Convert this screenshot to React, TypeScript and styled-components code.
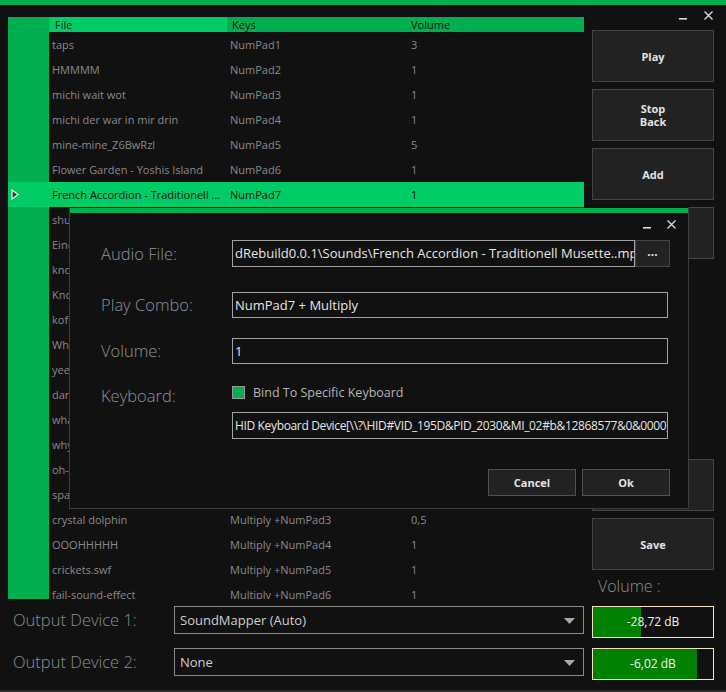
import React from 'react';
import styled, { createGlobalStyle } from 'styled-components';

const GREEN = '#00b050';
const BRIGHT = '#00cc66';
const UI = '"Open Sans", "Noto Sans", "DejaVu Sans", sans-serif';

const Global = createGlobalStyle`
  html, body { margin: 0; padding: 0; background: #111111; }
  body { font-family: ${UI}; }
  * { box-sizing: border-box; }
`;

const Window = styled.div`
  position: relative;
  width: 726px;
  height: 692px;
  background: #111111;
  overflow: hidden;
  display: flex;
  flex-direction: column;
  border-bottom: 2px solid #2a2a2a;
`;

const TopBar = styled.div`
  flex: none;
  height: 5px;
  background: ${GREEN};
`;

const Main = styled.div`
  flex: none;
  display: flex;
  gap: 8px;
  padding-left: 8px;
  height: 594px;
`;

const Grid = styled.div`
  margin-top: 12px;
  width: 576px;
  height: 582px;
  overflow: hidden;
  display: flex;
  flex-direction: column;
`;

const HeaderRow = styled.div`
  flex: none;
  display: grid;
  grid-template-columns: 41px 178px 181px 1fr;
  height: 15px;
  background: ${GREEN};
`;

const HeaderCell = styled.div<{ $active?: boolean; $pad?: number }>`
  background: ${(p) => (p.$active ? BRIGHT : GREEN)};
  color: #141414;
  font-size: 11px;
  line-height: 15px;
  padding-left: ${(p) => p.$pad ?? 5}px;
  white-space: nowrap;
`;

const Row = styled.div<{ $selected?: boolean }>`
  flex: none;
  display: grid;
  grid-template-columns: 41px 178px 181px 1fr;
  height: 25px;
  align-items: center;
  background: ${(p) => (p.$selected ? BRIGHT : '#111111')};
`;

const RowHeader = styled.div<{ $selected?: boolean }>`
  height: 25px;
  background: ${(p) => (p.$selected ? BRIGHT : GREEN)};
  display: flex;
  align-items: center;
  padding-left: 3px;
`;

const Cell = styled.div<{ $selected?: boolean }>`
  color: ${(p) => (p.$selected ? '#0e0e0e' : '#8a8a8a')};
  font-size: 11px;
  padding-left: 3px;
  white-space: nowrap;
  overflow: hidden;
`;

const Side = styled.div`
  width: 122px;
  display: flex;
  flex-direction: column;
  padding-bottom: 3px;
`;

const Controls = styled.div<{ $h: number; $top: number; $right: number; $gap: number }>`
  flex: none;
  height: ${(p) => p.$h}px;
  display: flex;
  justify-content: flex-end;
  align-items: flex-start;
  gap: ${(p) => p.$gap}px;
  padding-top: ${(p) => p.$top}px;
  padding-right: ${(p) => p.$right}px;
`;

const ButtonStack = styled.div`
  display: flex;
  flex-direction: column;
  gap: 7px;
`;

const SideButton = styled.div`
  height: 52px;
  background: #222222;
  border: 1px solid #454545;
  color: #e2e2e2;
  font-size: 11px;
  font-weight: 700;
  line-height: 13px;
  display: flex;
  align-items: center;
  justify-content: center;
  text-align: center;
`;

const Spacer = styled.div`
  flex: 1;
`;

const VolumeLabel = styled.div`
  margin-top: 6px;
  padding-left: 6px;
  color: #8a8f96;
  font-size: 16px;
  font-weight: 300;
  line-height: 20px;
`;

const Bottom = styled.div`
  display: flex;
  flex-direction: column;
  gap: 10px;
  padding-top: 7px;
  padding-left: 13px;
`;

const BottomRow = styled.div`
  display: grid;
  grid-template-columns: 153px 410px 122px;
  column-gap: 8px;
  align-items: start;
`;

const DeviceLabel = styled.div`
  color: #8a8f96;
  font-size: 16.5px;
  font-weight: 300;
  line-height: 28px;
  white-space: nowrap;
`;

const Dropdown = styled.div`
  position: relative;
  height: 28px;
  border: 1px solid #8a8a8a;
  background: #111111;
  color: #cfcfcf;
  font-size: 13px;
  line-height: 26px;
  padding-left: 5px;
`;

const DropArrow = styled.svg`
  position: absolute;
  right: 8px;
  top: 11px;
`;

const Meter = styled.div`
  position: relative;
  height: 32px;
  border: 1px solid #f3e4c6;
  background: #111111;
`;

const MeterFill = styled.div`
  position: absolute;
  left: 0;
  top: 0;
  bottom: 0;
  background: #008000;
`;

const MeterText = styled.div`
  position: relative;
  line-height: 30px;
  text-align: center;
  color: #f2f2f2;
  font-size: 12px;
`;

/* Dialog */
const Dialog = styled.div`
  position: absolute;
  left: 69px;
  top: 207px;
  width: 620px;
  height: 302px;
  background: #111111;
  border: 1px solid #3c3c3c;
  border-top: 1px solid #0c0c0c;
  display: flex;
  flex-direction: column;
`;

const DialogBar = styled.div`
  flex: none;
  height: 5px;
  background: ${GREEN};
`;

const Form = styled.div`
  display: flex;
  flex-direction: column;
  padding-left: 31px;
  padding-right: 18px;
`;

const FormRow = styled.div<{ $mt: number; $top?: boolean }>`
  display: grid;
  grid-template-columns: 131px 1fr;
  align-items: ${(p) => (p.$top ? 'start' : 'center')};
  margin-top: ${(p) => p.$mt}px;
`;

const FieldLabel = styled.div`
  color: #8a939c;
  font-size: 16.5px;
  font-weight: 300;
  line-height: 20px;
  white-space: nowrap;
`;

const Field = styled.div`
  display: flex;
`;

const Input = styled.div<{ $w: number; $h: number; $tight?: boolean }>`
  width: ${(p) => p.$w}px;
  height: ${(p) => p.$h}px;
  border: 1px solid #a2a2a2;
  background: #111111;
  color: #e6e6e6;
  font-size: ${(p) => (p.$tight ? '12px' : '13px')};
  letter-spacing: ${(p) => (p.$tight ? '-0.35px' : '0')};
  line-height: ${(p) => p.$h - 2}px;
  padding-left: 2px;
  white-space: nowrap;
  overflow: hidden;
`;

const Browse = styled.div`
  width: 35px;
  height: 27px;
  background: #222222;
  border: 1px solid #454545;
  color: #e2e2e2;
  font-size: 12px;
  font-weight: 700;
  line-height: 22px;
  text-align: center;
`;

const CheckRow = styled.div`
  display: flex;
  align-items: center;
  gap: 8px;
  height: 13px;
`;

const Box = styled.div`
  width: 13px;
  height: 13px;
  border: 1px solid #9a9a9a;
  background: ${GREEN};
`;

const CheckText = styled.div`
  color: #b4b4b4;
  font-size: 12.5px;
  line-height: 13px;
  white-space: nowrap;
`;

const ActionRow = styled.div`
  display: flex;
  justify-content: flex-end;
  gap: 6px;
  margin-top: 30px;
`;

const ActionButton = styled.div`
  width: 88px;
  height: 27px;
  background: #222222;
  border: 1px solid #505050;
  color: #e2e2e2;
  font-size: 11px;
  font-weight: 700;
  line-height: 25px;
  text-align: center;
`;

const MinIcon = () => (
  <svg width="8" height="9" viewBox="0 0 8 9">
    <rect x="0" y="7" width="8" height="1.6" fill="#dcdcdc" />
  </svg>
);

const CloseIcon = ({ size = 9 }: { size?: number }) => (
  <svg width={size} height={size} viewBox="0 0 9 9">
    <path d="M0.5 0.5 L8.5 8.5 M8.5 0.5 L0.5 8.5" stroke="#dcdcdc" strokeWidth="1.3" />
  </svg>
);

const Arrow = () => (
  <svg width="8" height="11" viewBox="0 0 8 11">
    <path d="M1 1 L7 5.5 L1 10 Z" fill="#3a3a3a" stroke="#f4f4f4" strokeWidth="1.2" />
  </svg>
);

type R = { file: string; keys: string; vol: string; selected?: boolean };

const rows: R[] = [
  { file: 'taps', keys: 'NumPad1', vol: '3' },
  { file: 'HMMMM', keys: 'NumPad2', vol: '1' },
  { file: 'michi wait wot', keys: 'NumPad3', vol: '1' },
  { file: 'michi der war in mir drin', keys: 'NumPad4', vol: '1' },
  { file: 'mine-mine_Z6BwRzl', keys: 'NumPad5', vol: '5' },
  { file: 'Flower Garden - Yoshis Island', keys: 'NumPad6', vol: '1' },
  { file: 'French Accordion - Traditionell ...', keys: 'NumPad7', vol: '1', selected: true },
  { file: 'shutup', keys: 'NumPad8', vol: '1' },
  { file: 'Eine kleine', keys: 'NumPad9', vol: '1' },
  { file: 'knock', keys: 'NumPad0', vol: '1' },
  { file: 'Knock Knock', keys: 'Add', vol: '1' },
  { file: 'kofi', keys: 'Subtract', vol: '1' },
  { file: 'What', keys: 'Divide', vol: '1' },
  { file: 'yeet', keys: 'Decimal', vol: '1' },
  { file: 'darude', keys: 'Multiply +NumPad0', vol: '1' },
  { file: 'wha', keys: 'Multiply +NumPad1', vol: '1' },
  { file: 'why', keys: 'Multiply +NumPad2', vol: '1' },
  { file: 'oh-no', keys: 'Multiply +Add', vol: '1' },
  { file: 'spanish', keys: 'Multiply +Subtract', vol: '1' },
  { file: 'crystal dolphin', keys: 'Multiply +NumPad3', vol: '0,5' },
  { file: 'OOOHHHHH', keys: 'Multiply +NumPad4', vol: '1' },
  { file: 'crickets.swf', keys: 'Multiply +NumPad5', vol: '1' },
  { file: 'fail-sound-effect', keys: 'Multiply +NumPad6', vol: '1' },
];

const AUDIO_PATH = 'dRebuild0.0.1\\Sounds\\French Accordion - Traditionell Musette..mp3';
const HID_PATH = 'HID Keyboard Device[\\\\?\\HID#VID_195D&PID_2030&MI_02#b&12868577&0&0000}';

const Triangle = () => (
  <DropArrow width="11" height="6" viewBox="0 0 11 6">
    <path d="M0 0 L11 0 L5.5 6 Z" fill="#a8a8a8" />
  </DropArrow>
);

export default function App() {
  return (
    <>
      <Global />
      <Window>
        <TopBar />
        <Main>
          <Grid>
            <HeaderRow>
              <HeaderCell />
              <HeaderCell $active $pad={6}>File</HeaderCell>
              <HeaderCell $pad={5}>Keys</HeaderCell>
              <HeaderCell $pad={3}>Volume</HeaderCell>
            </HeaderRow>
            {rows.map((r, i) => (
              <Row key={i} $selected={r.selected}>
                <RowHeader $selected={r.selected}>{r.selected && <Arrow />}</RowHeader>
                <Cell $selected={r.selected}>{r.file}</Cell>
                <Cell $selected={r.selected}>{r.keys}</Cell>
                <Cell $selected={r.selected}>{r.vol}</Cell>
              </Row>
            ))}
          </Grid>
          <Side>
            <Controls $h={25} $top={6} $right={1} $gap={17}>
              <MinIcon />
              <CloseIcon />
            </Controls>
            <ButtonStack>
              <SideButton>Play</SideButton>
              <SideButton>
                Stop
                <br />
                Back
              </SideButton>
              <SideButton>Add</SideButton>
              <SideButton>Edit</SideButton>
            </ButtonStack>
            <Spacer />
            <ButtonStack>
              <SideButton>Remove</SideButton>
              <SideButton>Save</SideButton>
            </ButtonStack>
            <VolumeLabel>Volume :</VolumeLabel>
          </Side>
        </Main>
        <Bottom>
          <BottomRow>
            <DeviceLabel>Output Device 1:</DeviceLabel>
            <Dropdown>
              SoundMapper (Auto)
              <Triangle />
            </Dropdown>
            <Meter>
              <MeterFill style={{ width: '40%' }} />
              <MeterText>-28,72 dB</MeterText>
            </Meter>
          </BottomRow>
          <BottomRow>
            <DeviceLabel>Output Device 2:</DeviceLabel>
            <Dropdown>
              None
              <Triangle />
            </Dropdown>
            <Meter>
              <MeterFill style={{ width: '86.5%' }} />
              <MeterText>-6,02 dB</MeterText>
            </Meter>
          </BottomRow>
        </Bottom>

        <Dialog>
          <DialogBar />
          <Controls $h={27} $top={7} $right={12} $gap={16}>
            <MinIcon />
            <CloseIcon size={9} />
          </Controls>
          <Form>
            <FormRow $mt={0}>
              <FieldLabel>Audio File:</FieldLabel>
              <Field>
                <Input $w={403} $h={27}>{AUDIO_PATH}</Input>
                <Browse>...</Browse>
              </Field>
            </FormRow>
            <FormRow $mt={25}>
              <FieldLabel>Play Combo:</FieldLabel>
              <Input $w={436} $h={26}>NumPad7 + Multiply</Input>
            </FormRow>
            <FormRow $mt={20}>
              <FieldLabel>Volume:</FieldLabel>
              <Input $w={436} $h={26}>1</Input>
            </FormRow>
            <FormRow $mt={22} $top>
              <FieldLabel>Keyboard:</FieldLabel>
              <CheckRow>
                <Box />
                <CheckText>Bind To Specific Keyboard</CheckText>
              </CheckRow>
            </FormRow>
            <FormRow $mt={6}>
              <div />
              <Input $w={436} $h={27} $tight>{HID_PATH}</Input>
            </FormRow>
            <ActionRow>
              <ActionButton>Cancel</ActionButton>
              <ActionButton>Ok</ActionButton>
            </ActionRow>
          </Form>
        </Dialog>
      </Window>
    </>
  );
}
